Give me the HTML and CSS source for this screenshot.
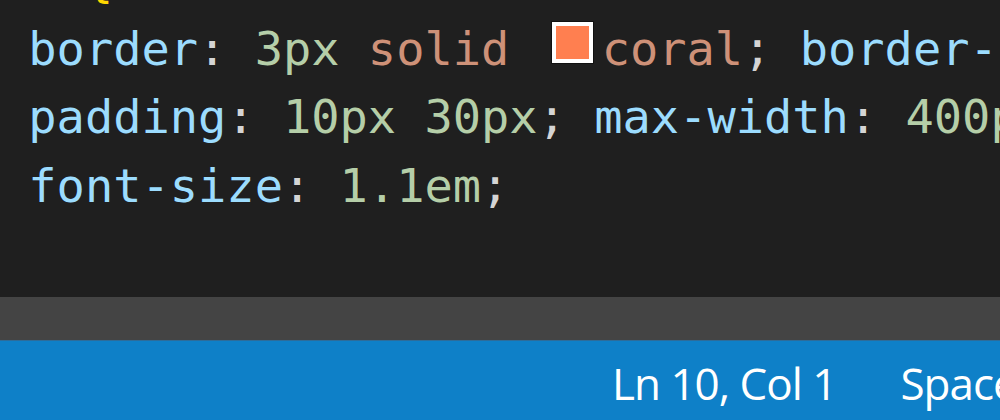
FILE: index.html
```html
<!DOCTYPE html>
<html>
<head>
<meta charset="utf-8">
<link rel="stylesheet" href="styles.css">
</head>
<body>
<div class="window">
  <div class="editor">
    <div class="code">
      <div class="line"><span class="sel">nt</span> <span class="brace">{</span></div>
      <div class="line"> <span class="prop">border</span><span class="punc">:</span> <span class="num">3px</span> <span class="str">solid</span> <span class="swatch"></span><span class="str">coral</span><span class="punc">;</span> <span class="prop">border-</span></div>
      <div class="line"> <span class="prop">padding</span><span class="punc">:</span> <span class="num">10px</span> <span class="num">30px</span><span class="punc">;</span> <span class="prop">max-width</span><span class="punc">:</span> <span class="num">400px</span></div>
      <div class="line"> <span class="prop">font-size</span><span class="punc">:</span> <span class="num">1.1em</span><span class="punc">;</span></div>
    </div>
  </div>
  <div class="scrollband"></div>
  <div class="statusbar">
    <span class="status-item">Ln 10, Col 1</span>
    <span class="status-item">Spaces: 2</span>
  </div>
</div>
</body>
</html>
```

FILE: styles.css
```css
html, body {
  margin: 0;
  padding: 0;
  background: #1e1e1e;
  overflow: hidden;
}

.window {
  width: 1000px;
  height: 420px;
  display: flex;
  flex-direction: column;
  overflow: hidden;
}

.editor {
  height: 297px;
  flex: none;
  background: #1f1f1f;
  overflow: hidden;
}

.code {
  margin-top: -54px;
  font-family: "DejaVu Sans Mono", "Liberation Mono", monospace;
  font-size: 47px;
  line-height: 68.5px;
  color: #d4d4d4;
}

.line {
  height: 68.5px;
  white-space: pre;
}

.sel { color: #d4d4d4; }
.brace { color: #ffd700; }
.prop { color: #9cdcfe; }
.num { color: #b5cea8; }
.str { color: #ce9178; }
.punc { color: #d4d4d4; }

.swatch {
  display: inline-block;
  box-sizing: border-box;
  width: 41px;
  height: 41px;
  margin: 0 9px 2px 14px;
  background: #ff7f50;
  border: 4px solid #ffffff;
  box-shadow: 0 0 0 1px #111;
  vertical-align: baseline;
}

.scrollband {
  height: 43px;
  flex: none;
  background: #444444;
  border-bottom: 1px solid #2d6c9a;
}

.statusbar {
  flex: 1;
  background: #0e80c8;
  display: flex;
  align-items: flex-start;
  padding: 12px 0 0 612px;
  gap: 64px;
  white-space: nowrap;
  font-family: "Open Sans", "Noto Sans", sans-serif;
  font-size: 44px;
  line-height: 60px;
  letter-spacing: -1px;
  color: #ffffff;
}
```
